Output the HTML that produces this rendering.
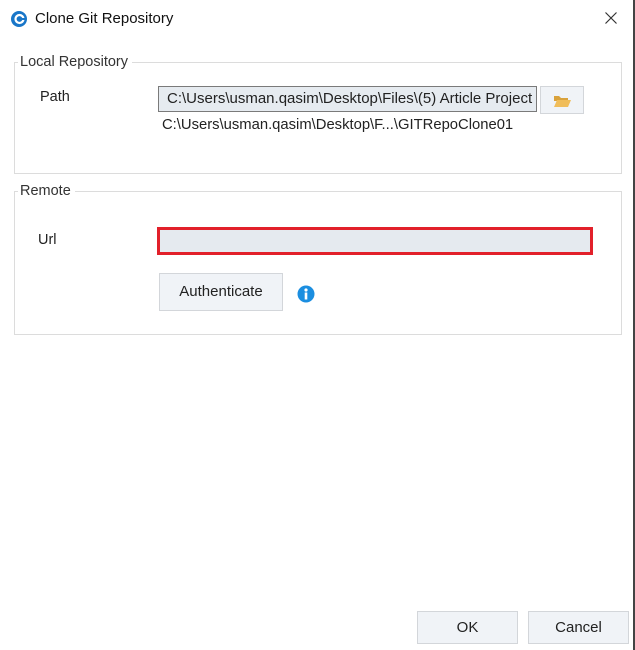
<!DOCTYPE html>
<html><head><style>
body{margin:0;width:635px;height:650px;background:#fff;position:relative;overflow:hidden;font-family:"Liberation Sans",sans-serif;font-size:14px;color:#222}
.a{position:absolute}
.grp{position:absolute;border:1px solid #dcdcdc}
.leg{position:absolute;background:#fff;padding:0 4px 0 2px;color:#333}
.btn{position:absolute;background:#f0f3f7;border:1px solid #d3d6da;box-sizing:border-box;text-align:center;color:#222}
</style></head><body>
<div class="a" style="left:633px;top:0;width:2px;height:650px;background:#444"></div>
<svg class="a" style="left:10px;top:10px" width="18" height="18" viewBox="0 0 18 18"><circle cx="9" cy="9" r="8" fill="#1976c8"/><circle cx="9.5" cy="9" r="4" fill="none" stroke="#fff" stroke-width="2.2"/><rect x="10" y="8" width="6" height="2" fill="#1976c8"/></svg>
<div class="a" style="left:35px;top:10px;font-size:15px;color:#111">Clone Git Repository</div>
<svg class="a" style="left:605px;top:12px" width="12" height="12" viewBox="0 0 12 12"><path d="M0.5 0.5L11.5 11.5M11.5 0.5L0.5 11.5" stroke="#333" stroke-width="1.2"/></svg>

<div class="grp" style="left:14px;top:62px;width:606px;height:110px"></div>
<div class="leg" style="left:18px;top:54px;font-size:14.5px">Local Repository</div>
<div class="a" style="left:40px;top:89px;font-size:14.5px">Path</div>
<div class="a" style="left:158px;top:86px;height:24px;background:#e6ebf0;border:1px solid #7a7a7a;line-height:24px;padding-left:8px;overflow:hidden;white-space:nowrap;width:369px;font-size:15px">C:\Users\usman.qasim\Desktop\Files\(5) Article Project</div>
<div class="btn" style="left:540px;top:86px;width:44px;height:28px"><svg width="20" height="16" viewBox="0 0 20 16" style="margin-top:6px"><path d="M2 3h5l2 2h7v3H2z" fill="#d9a23c"/><path d="M2 14L5 7h14l-3 7z" fill="#f0bd5a"/></svg></div>
<div class="a" style="left:162px;top:117px;font-size:14.8px">C:\Users\usman.qasim\Desktop\F...\GITRepoClone01</div>

<div class="grp" style="left:14px;top:191px;width:606px;height:142px"></div>
<div class="leg" style="left:18px;top:183px;font-size:14.5px">Remote</div>
<div class="a" style="left:38px;top:232px;font-size:14.5px">Url</div>
<div class="a" style="left:157px;top:227px;width:430px;height:22px;background:#e5eaef;border:3px solid #e2202a"></div>
<div class="btn" style="left:159px;top:273px;width:124px;height:38px;line-height:36px;font-size:15px">Authenticate</div>
<svg class="a" style="left:297px;top:285px" width="18" height="18" viewBox="0 0 18 18"><circle cx="9" cy="9" r="8.5" fill="#1b8ee0"/><circle cx="9" cy="5" r="1.6" fill="#fff"/><rect x="7.7" y="7.5" width="2.6" height="7" fill="#fff"/></svg>

<div class="btn" style="left:417px;top:611px;width:101px;height:33px;line-height:31px;font-size:15px">OK</div>
<div class="btn" style="left:528px;top:611px;width:101px;height:33px;line-height:31px;font-size:15px">Cancel</div>
</body></html>
